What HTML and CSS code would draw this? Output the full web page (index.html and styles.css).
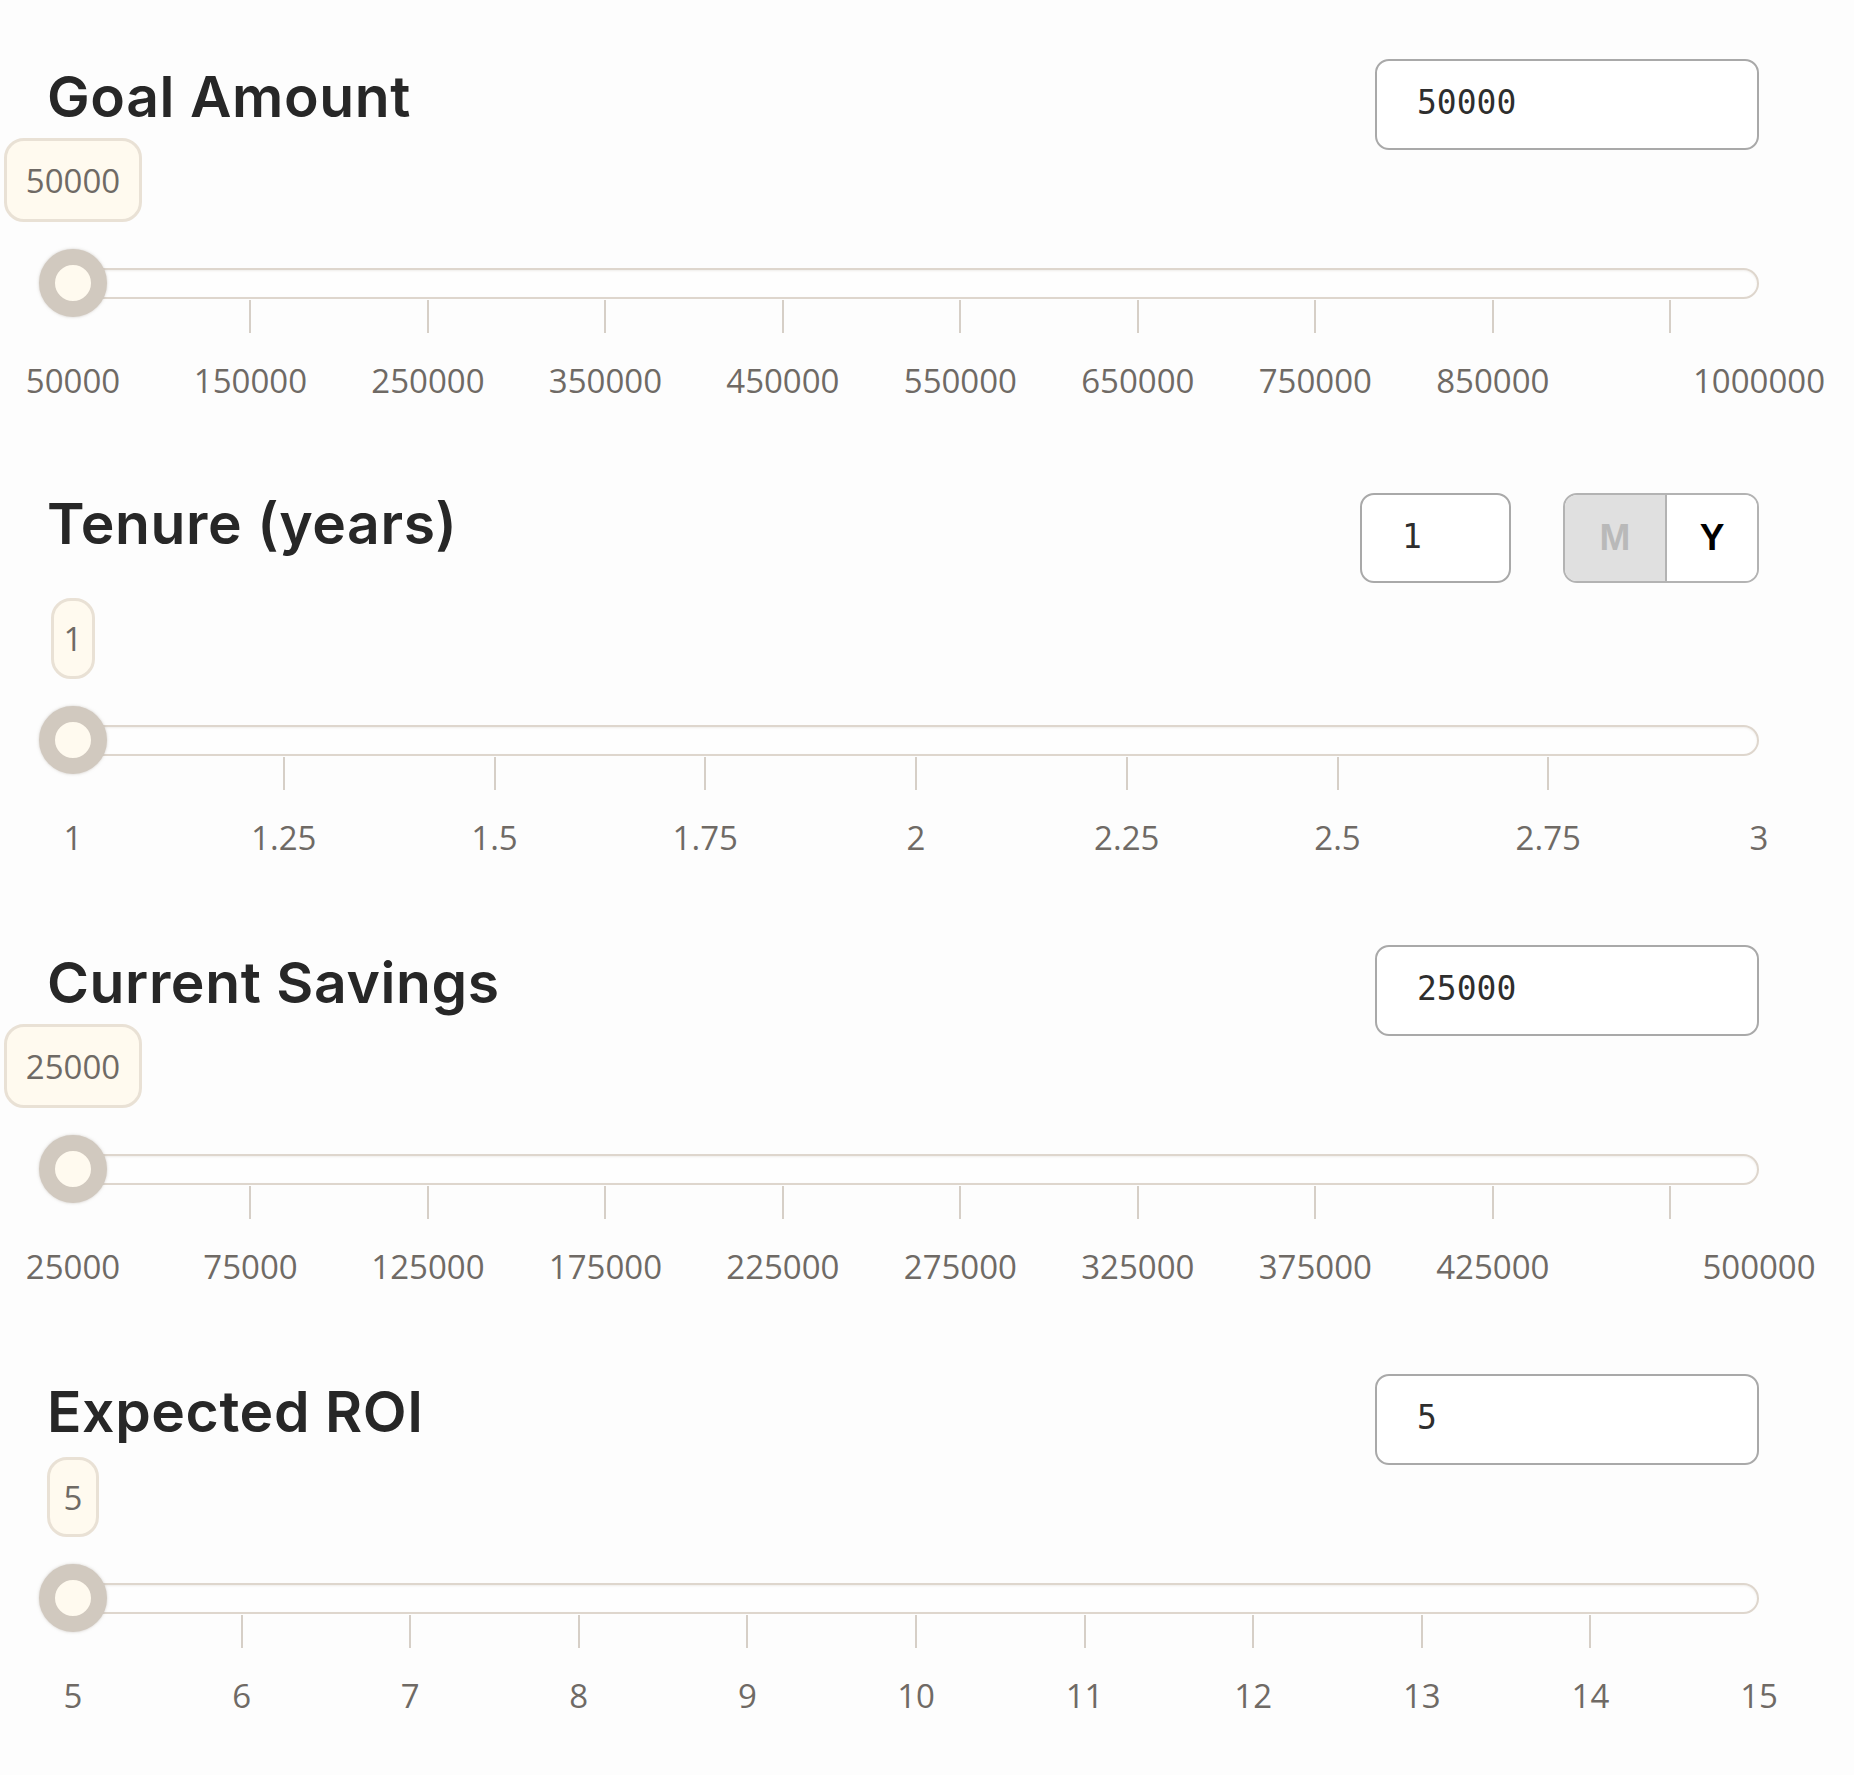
FILE: index.html
```html
<!DOCTYPE html>
<html>
<head>
<meta charset="utf-8">
<link rel="stylesheet" href="styles.css">
</head>
<body>
<main class="calc">
  <section class="field first">
    <div class="head">
      <h2 class="title">Goal Amount</h2>
      <div class="controls"><div class="num">50000</div></div>
    </div>
    <div class="slider">
      <div class="track"></div>
      <div class="thumb"><span class="bubble wide">50000</span></div>
    </div>
    <div class="ticks">
      <i style="left:10.526%"></i><i style="left:21.053%"></i><i style="left:31.579%"></i><i style="left:42.105%"></i><i style="left:52.632%"></i><i style="left:63.158%"></i><i style="left:73.684%"></i><i style="left:84.211%"></i><i style="left:94.737%"></i>
    </div>
    <div class="labels">
      <span style="left:0%">50000</span><span style="left:10.526%">150000</span><span style="left:21.053%">250000</span><span style="left:31.579%">350000</span><span style="left:42.105%">450000</span><span style="left:52.632%">550000</span><span style="left:63.158%">650000</span><span style="left:73.684%">750000</span><span style="left:84.211%">850000</span><span style="left:100%">1000000</span>
    </div>
  </section>

  <section class="field tenure">
    <div class="head">
      <h2 class="title">Tenure (years)</h2>
      <div class="controls">
        <div class="num small">1</div>
        <div class="toggle"><span class="opt off">M</span><span class="opt on">Y</span></div>
      </div>
    </div>
    <div class="slider">
      <div class="track"></div>
      <div class="thumb"><span class="bubble one">1</span></div>
    </div>
    <div class="ticks">
      <i style="left:12.5%"></i><i style="left:25%"></i><i style="left:37.5%"></i><i style="left:50%"></i><i style="left:62.5%"></i><i style="left:75%"></i><i style="left:87.5%"></i>
    </div>
    <div class="labels">
      <span style="left:0%">1</span><span style="left:12.5%">1.25</span><span style="left:25%">1.5</span><span style="left:37.5%">1.75</span><span style="left:50%">2</span><span style="left:62.5%">2.25</span><span style="left:75%">2.5</span><span style="left:87.5%">2.75</span><span style="left:100%">3</span>
    </div>
  </section>

  <section class="field">
    <div class="head">
      <h2 class="title">Current Savings</h2>
      <div class="controls"><div class="num">25000</div></div>
    </div>
    <div class="slider">
      <div class="track"></div>
      <div class="thumb"><span class="bubble wide">25000</span></div>
    </div>
    <div class="ticks">
      <i style="left:10.526%"></i><i style="left:21.053%"></i><i style="left:31.579%"></i><i style="left:42.105%"></i><i style="left:52.632%"></i><i style="left:63.158%"></i><i style="left:73.684%"></i><i style="left:84.211%"></i><i style="left:94.737%"></i>
    </div>
    <div class="labels">
      <span style="left:0%">25000</span><span style="left:10.526%">75000</span><span style="left:21.053%">125000</span><span style="left:31.579%">175000</span><span style="left:42.105%">225000</span><span style="left:52.632%">275000</span><span style="left:63.158%">325000</span><span style="left:73.684%">375000</span><span style="left:84.211%">425000</span><span style="left:100%">500000</span>
    </div>
  </section>

  <section class="field">
    <div class="head">
      <h2 class="title">Expected ROI</h2>
      <div class="controls"><div class="num">5</div></div>
    </div>
    <div class="slider">
      <div class="track"></div>
      <div class="thumb"><span class="bubble five">5</span></div>
    </div>
    <div class="ticks">
      <i style="left:10%"></i><i style="left:20%"></i><i style="left:30%"></i><i style="left:40%"></i><i style="left:50%"></i><i style="left:60%"></i><i style="left:70%"></i><i style="left:80%"></i><i style="left:90%"></i>
    </div>
    <div class="labels">
      <span style="left:0%">5</span><span style="left:10%">6</span><span style="left:20%">7</span><span style="left:30%">8</span><span style="left:40%">9</span><span style="left:50%">10</span><span style="left:60%">11</span><span style="left:70%">12</span><span style="left:80%">13</span><span style="left:90%">14</span><span style="left:100%">15</span>
    </div>
  </section>
</main>
</body>
</html>
```
FILE: styles.css
```css
html, body {
  margin: 0;
  padding: 0;
  background: #fdfdfd;
}

.calc {
  width: 1720px;
  margin-left: 39px;
  padding-top: 59px;
  display: flex;
  flex-direction: column;
  gap: 83px;
  font-family: "Open Sans", sans-serif;
}

.field.first {
  margin-bottom: 5px;
}

.head {
  display: flex;
  justify-content: space-between;
  align-items: flex-start;
  height: 91px;
}

.title {
  margin: 0 0 0 8px;
  padding-top: 2px;
  font-family: Inter, sans-serif;
  font-weight: 600;
  font-size: 57px;
  line-height: 72px;
  color: #272727;
  letter-spacing: 0.6px;
}

.tenure .title {
  padding-top: 0;
  line-height: 62px;
}

.controls {
  display: flex;
  gap: 52px;
}

.num {
  box-sizing: border-box;
  width: 384px;
  height: 91px;
  border: 2px solid #a9a9a9;
  border-radius: 14px;
  padding-left: 40px;
  padding-bottom: 4px;
  display: flex;
  align-items: center;
  font-family: "DejaVu Sans Mono", monospace;
  font-size: 33px;
  color: #2e2e2e;
  background: #fff;
}

.num.small {
  width: 151px;
  height: 90px;
}

.toggle {
  box-sizing: border-box;
  width: 196px;
  height: 90px;
  border: 2px solid #b3b3b3;
  border-radius: 14px;
  overflow: hidden;
  display: flex;
}

.opt {
  flex: 1;
  display: flex;
  align-items: center;
  justify-content: center;
  font-family: "Liberation Sans", Arial, sans-serif;
  font-weight: 700;
  font-size: 37px;
}

.opt.off {
  flex: 0 0 100px;
  background: #e0e0e0;
  color: #b9b9b9;
  border-right: 2px solid #b3b3b3;
}

.opt.on {
  background: #fff;
  color: #000;
}

.slider {
  position: relative;
  height: 51px;
  margin-top: 99px;
}

.tenure .slider {
  margin-top: 122px;
}

.track {
  position: absolute;
  left: 20px;
  right: 0;
  top: 19px;
  height: 31px;
  box-sizing: border-box;
  border: 2px solid #ded6cd;
  border-radius: 16px;
  background: #fefefe;
  box-shadow: inset 0 1px 2px rgba(200, 190, 180, 0.25);
}

.thumb {
  position: absolute;
  left: 0;
  top: 0;
  width: 68px;
  height: 68px;
  box-sizing: border-box;
  border-radius: 50%;
  border: 16px solid #d1c9bf;
  background: #fffaef;
  box-shadow: 0 0 3px rgba(170, 160, 150, 0.5);
}

.bubble {
  position: absolute;
  left: 50%;
  bottom: calc(100% + 43px);
  transform: translateX(-50%);
  box-sizing: border-box;
  height: 84px;
  display: flex;
  align-items: center;
  justify-content: center;
  background: #fffaef;
  border: 3px solid #e9e1d5;
  border-radius: 20px;
  font-family: "Open Sans", sans-serif;
  font-size: 33px;
  color: #6f6a65;
  white-space: nowrap;
}

.bubble.wide {
  width: 138px;
}

.bubble.one {
  width: 44px;
  height: 81px;
}

.bubble.five {
  width: 52px;
  height: 80px;
}

.ticks {
  position: relative;
  height: 33px;
  margin-left: 34px;
}

.ticks i {
  position: absolute;
  top: 0;
  width: 2px;
  height: 33px;
  margin-left: -1px;
  background: #d6cfc7;
}

.labels {
  position: relative;
  height: 48px;
  margin-top: 24px;
  margin-left: 34px;
}

.labels span {
  position: absolute;
  top: 0;
  transform: translateX(-50%);
  font-size: 33px;
  line-height: 48px;
  color: #6f6a65;
  white-space: nowrap;
}
```
